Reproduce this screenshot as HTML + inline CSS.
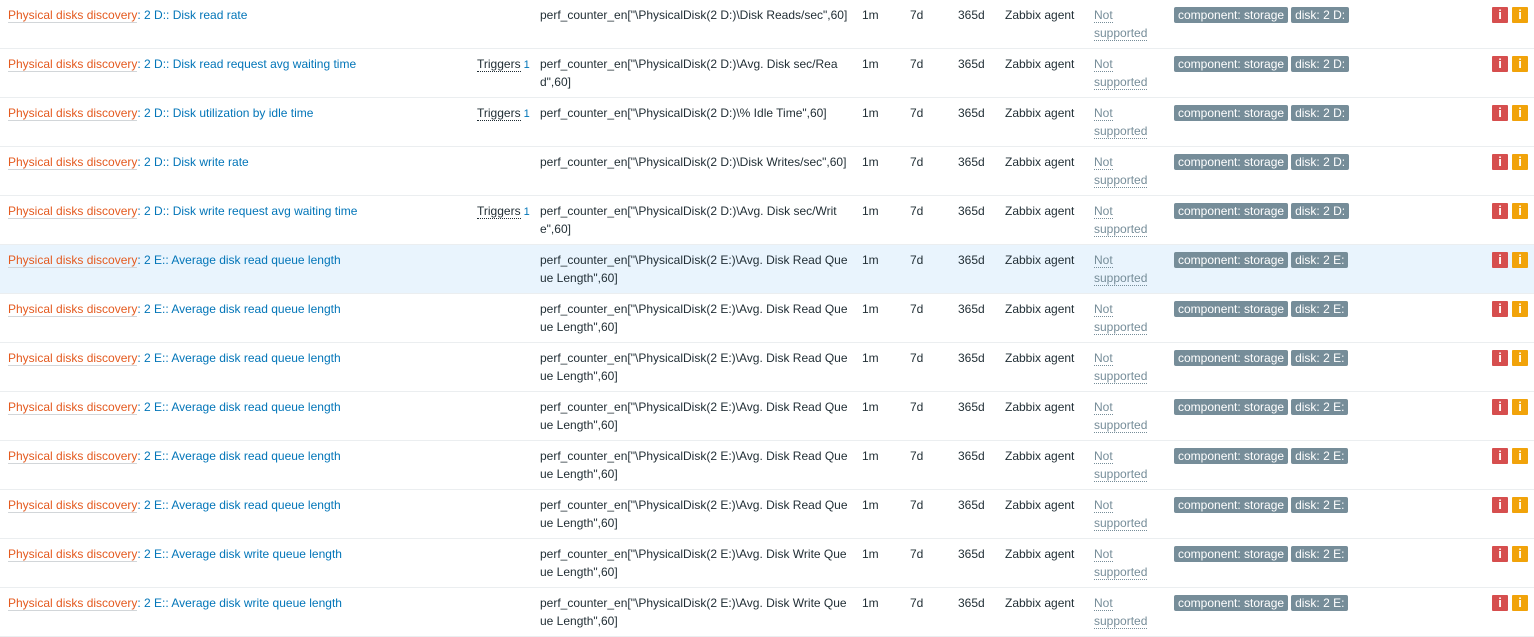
<!DOCTYPE html>
<html><head><meta charset="utf-8"><style>
body{margin:0;width:1534px;height:614px;overflow:hidden;background:#fff;font-family:"Liberation Sans",Arial,sans-serif;font-size:12px;color:#1f2c33}
.r{position:relative;height:48px;border-bottom:1px solid #ebeef0}
.r.h{background:#e9f4fd}
.c{position:absolute;top:6px;line-height:18px;white-space:nowrap}
.n{left:8px}
.n .p{color:#e45a1f;border-bottom:1px solid #d2d6d9}
.n .l{color:#0275b8}
.t{left:477px}
.t span{border-bottom:1px dotted #1f2c33}
.t sup{color:#0275b8;font-size:11px;vertical-align:0;margin-left:3px}
.k{left:540px}
.i1{left:862px}.i2{left:910px}.i3{left:958px}.i4{left:1005px}
.s{left:1094px;color:#768d99}
.s span{border-bottom:1px dotted #768d99}
.g{left:1174px;top:7px;line-height:16px}
.g b{font-weight:normal;background:#768d99;color:#fff;padding:0 4px;border-radius:2px;margin-right:3px;display:inline-block}
.ic{position:absolute;top:7px;width:16px;height:16px;color:#fff;font-weight:bold;text-align:center;line-height:16px;font-size:13px;border-radius:1px}
.ic1{left:1492px;background:#d64e4e}.ic2{left:1512px;background:#f1a30a}
</style></head><body>

<div class="r"><div class="c n"><span class="p">Physical disks discovery</span><span class="l">: 2 D:: Disk read rate</span></div><div class="c k">perf_counter_en["\PhysicalDisk(2 D:)\Disk Reads/sec",60]</div><div class="c i1">1m</div><div class="c i2">7d</div><div class="c i3">365d</div><div class="c i4">Zabbix agent</div><div class="c s"><span>Not</span><br><span>supported</span></div><div class="c g"><b>component: storage</b><b>disk: 2 D:</b></div><div class="ic ic1">i</div><div class="ic ic2">i</div></div>

<div class="r"><div class="c n"><span class="p">Physical disks discovery</span><span class="l">: 2 D:: Disk read request avg waiting time</span></div><div class="c t"><span>Triggers</span><sup>1</sup></div><div class="c k">perf_counter_en["\PhysicalDisk(2 D:)\Avg. Disk sec/Rea<br>d",60]</div><div class="c i1">1m</div><div class="c i2">7d</div><div class="c i3">365d</div><div class="c i4">Zabbix agent</div><div class="c s"><span>Not</span><br><span>supported</span></div><div class="c g"><b>component: storage</b><b>disk: 2 D:</b></div><div class="ic ic1">i</div><div class="ic ic2">i</div></div>

<div class="r"><div class="c n"><span class="p">Physical disks discovery</span><span class="l">: 2 D:: Disk utilization by idle time</span></div><div class="c t"><span>Triggers</span><sup>1</sup></div><div class="c k">perf_counter_en["\PhysicalDisk(2 D:)\% Idle Time",60]</div><div class="c i1">1m</div><div class="c i2">7d</div><div class="c i3">365d</div><div class="c i4">Zabbix agent</div><div class="c s"><span>Not</span><br><span>supported</span></div><div class="c g"><b>component: storage</b><b>disk: 2 D:</b></div><div class="ic ic1">i</div><div class="ic ic2">i</div></div>

<div class="r"><div class="c n"><span class="p">Physical disks discovery</span><span class="l">: 2 D:: Disk write rate</span></div><div class="c k">perf_counter_en["\PhysicalDisk(2 D:)\Disk Writes/sec",60]</div><div class="c i1">1m</div><div class="c i2">7d</div><div class="c i3">365d</div><div class="c i4">Zabbix agent</div><div class="c s"><span>Not</span><br><span>supported</span></div><div class="c g"><b>component: storage</b><b>disk: 2 D:</b></div><div class="ic ic1">i</div><div class="ic ic2">i</div></div>

<div class="r"><div class="c n"><span class="p">Physical disks discovery</span><span class="l">: 2 D:: Disk write request avg waiting time</span></div><div class="c t"><span>Triggers</span><sup>1</sup></div><div class="c k">perf_counter_en["\PhysicalDisk(2 D:)\Avg. Disk sec/Writ<br>e",60]</div><div class="c i1">1m</div><div class="c i2">7d</div><div class="c i3">365d</div><div class="c i4">Zabbix agent</div><div class="c s"><span>Not</span><br><span>supported</span></div><div class="c g"><b>component: storage</b><b>disk: 2 D:</b></div><div class="ic ic1">i</div><div class="ic ic2">i</div></div>

<div class="r h"><div class="c n"><span class="p">Physical disks discovery</span><span class="l">: 2 E:: Average disk read queue length</span></div><div class="c k">perf_counter_en["\PhysicalDisk(2 E:)\Avg. Disk Read Que<br>ue Length",60]</div><div class="c i1">1m</div><div class="c i2">7d</div><div class="c i3">365d</div><div class="c i4">Zabbix agent</div><div class="c s"><span>Not</span><br><span>supported</span></div><div class="c g"><b>component: storage</b><b>disk: 2 E:</b></div><div class="ic ic1">i</div><div class="ic ic2">i</div></div>

<div class="r"><div class="c n"><span class="p">Physical disks discovery</span><span class="l">: 2 E:: Average disk read queue length</span></div><div class="c k">perf_counter_en["\PhysicalDisk(2 E:)\Avg. Disk Read Que<br>ue Length",60]</div><div class="c i1">1m</div><div class="c i2">7d</div><div class="c i3">365d</div><div class="c i4">Zabbix agent</div><div class="c s"><span>Not</span><br><span>supported</span></div><div class="c g"><b>component: storage</b><b>disk: 2 E:</b></div><div class="ic ic1">i</div><div class="ic ic2">i</div></div>

<div class="r"><div class="c n"><span class="p">Physical disks discovery</span><span class="l">: 2 E:: Average disk read queue length</span></div><div class="c k">perf_counter_en["\PhysicalDisk(2 E:)\Avg. Disk Read Que<br>ue Length",60]</div><div class="c i1">1m</div><div class="c i2">7d</div><div class="c i3">365d</div><div class="c i4">Zabbix agent</div><div class="c s"><span>Not</span><br><span>supported</span></div><div class="c g"><b>component: storage</b><b>disk: 2 E:</b></div><div class="ic ic1">i</div><div class="ic ic2">i</div></div>

<div class="r"><div class="c n"><span class="p">Physical disks discovery</span><span class="l">: 2 E:: Average disk read queue length</span></div><div class="c k">perf_counter_en["\PhysicalDisk(2 E:)\Avg. Disk Read Que<br>ue Length",60]</div><div class="c i1">1m</div><div class="c i2">7d</div><div class="c i3">365d</div><div class="c i4">Zabbix agent</div><div class="c s"><span>Not</span><br><span>supported</span></div><div class="c g"><b>component: storage</b><b>disk: 2 E:</b></div><div class="ic ic1">i</div><div class="ic ic2">i</div></div>

<div class="r"><div class="c n"><span class="p">Physical disks discovery</span><span class="l">: 2 E:: Average disk read queue length</span></div><div class="c k">perf_counter_en["\PhysicalDisk(2 E:)\Avg. Disk Read Que<br>ue Length",60]</div><div class="c i1">1m</div><div class="c i2">7d</div><div class="c i3">365d</div><div class="c i4">Zabbix agent</div><div class="c s"><span>Not</span><br><span>supported</span></div><div class="c g"><b>component: storage</b><b>disk: 2 E:</b></div><div class="ic ic1">i</div><div class="ic ic2">i</div></div>

<div class="r"><div class="c n"><span class="p">Physical disks discovery</span><span class="l">: 2 E:: Average disk read queue length</span></div><div class="c k">perf_counter_en["\PhysicalDisk(2 E:)\Avg. Disk Read Que<br>ue Length",60]</div><div class="c i1">1m</div><div class="c i2">7d</div><div class="c i3">365d</div><div class="c i4">Zabbix agent</div><div class="c s"><span>Not</span><br><span>supported</span></div><div class="c g"><b>component: storage</b><b>disk: 2 E:</b></div><div class="ic ic1">i</div><div class="ic ic2">i</div></div>

<div class="r"><div class="c n"><span class="p">Physical disks discovery</span><span class="l">: 2 E:: Average disk write queue length</span></div><div class="c k">perf_counter_en["\PhysicalDisk(2 E:)\Avg. Disk Write Que<br>ue Length",60]</div><div class="c i1">1m</div><div class="c i2">7d</div><div class="c i3">365d</div><div class="c i4">Zabbix agent</div><div class="c s"><span>Not</span><br><span>supported</span></div><div class="c g"><b>component: storage</b><b>disk: 2 E:</b></div><div class="ic ic1">i</div><div class="ic ic2">i</div></div>

<div class="r"><div class="c n"><span class="p">Physical disks discovery</span><span class="l">: 2 E:: Average disk write queue length</span></div><div class="c k">perf_counter_en["\PhysicalDisk(2 E:)\Avg. Disk Write Que<br>ue Length",60]</div><div class="c i1">1m</div><div class="c i2">7d</div><div class="c i3">365d</div><div class="c i4">Zabbix agent</div><div class="c s"><span>Not</span><br><span>supported</span></div><div class="c g"><b>component: storage</b><b>disk: 2 E:</b></div><div class="ic ic1">i</div><div class="ic ic2">i</div></div>

</body></html>
